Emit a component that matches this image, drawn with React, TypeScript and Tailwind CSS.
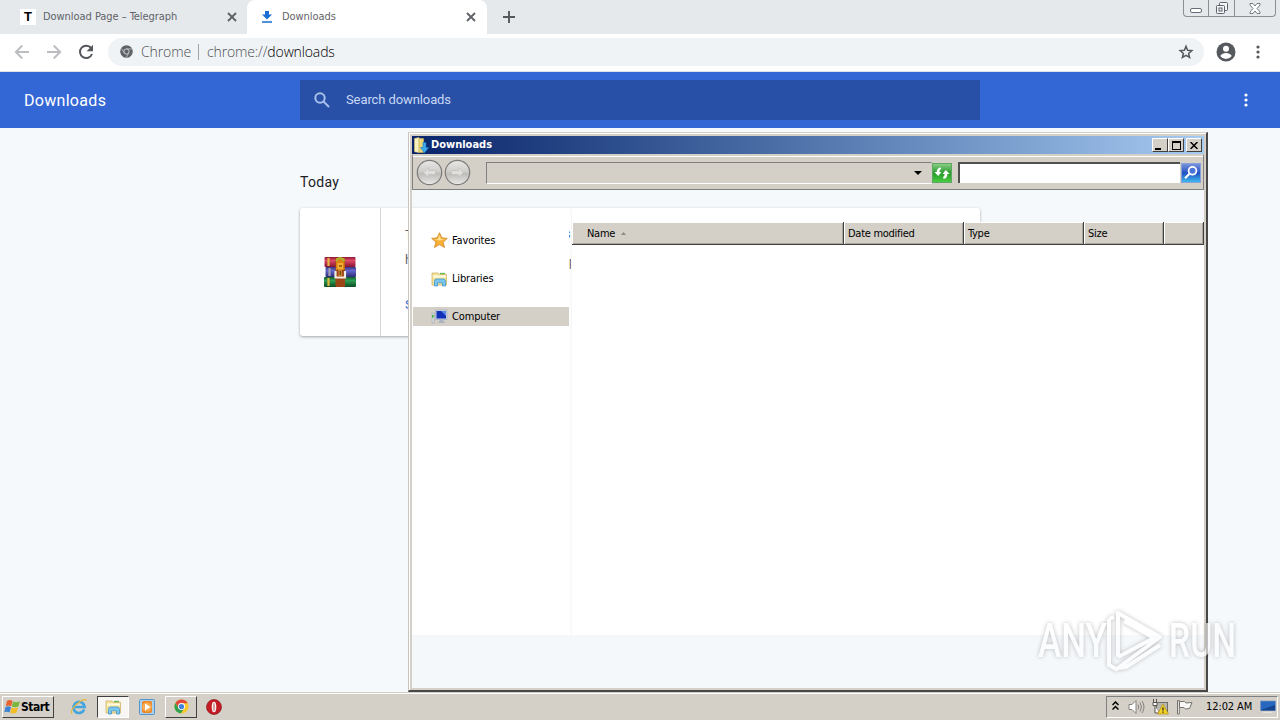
import type { ReactNode } from "react";

type IconProps = { className?: string };

function Dots({ className }: IconProps) {
  return (
    <svg width="4" height="16" viewBox="0 0 4 16" fill="currentColor" className={className}>
      <circle cx="2" cy="3" r="1.6" />
      <circle cx="2" cy="8" r="1.6" />
      <circle cx="2" cy="13" r="1.6" />
    </svg>
  );
}

function CloseIcon() {
  return (
    <svg width="10" height="10" viewBox="0 0 10 10" stroke="#5f6368" strokeWidth="1.9">
      <path d="M1 1l8 8M9 1L1 9" />
    </svg>
  );
}

function ArrowIcon({ className }: IconProps) {
  return (
    <svg width="16" height="16" viewBox="0 0 16 16" fill="none" stroke="#bbbdc0" strokeWidth="1.9" className={className}>
      <path d="M15 8H2M8.3 1.5L1.8 8l6.5 6.5" />
    </svg>
  );
}

function ReloadIcon() {
  return (
    <svg width="16" height="16" viewBox="0 0 16 16">
      <path d="M13.2 4.2A6.2 6.2 0 1 0 14 10" fill="none" stroke="#55585c" strokeWidth="2" />
      <path d="M15 0.8v6.4H8.6z" fill="#55585c" />
    </svg>
  );
}

function ChromeGrayIcon() {
  return (
    <svg width="13" height="13" viewBox="0 0 13 13">
      <circle cx="6.5" cy="6.5" r="6.3" fill="#5f6368" />
      <circle cx="6.5" cy="6.5" r="2.6" fill="none" stroke="#d4d7da" strokeWidth="0.9" />
      <path d="M6.5 3.9h5.6M4.2 7.9L1.6 3.6M8.8 7.8L6.2 12.4" stroke="#d4d7da" strokeWidth="0.7" />
    </svg>
  );
}

function ChromeColorIcon() {
  return (
    <svg width="15" height="15" viewBox="0 0 16 16">
      <circle cx="8" cy="8" r="7.5" fill="#f7c92e" />
      <path d="M1.5 4.2A7.5 7.5 0 0 1 14.6 4.4H8L4.8 9.8z" fill="#df4a3c" />
      <path d="M1.5 4.2A7.5 7.5 0 0 0 7.2 15.5L11 9.8H4.8z" fill="#31a04f" />
      <circle cx="8" cy="8" r="3.7" fill="#fff" />
      <circle cx="8" cy="8" r="2.8" fill="#4280e0" />
    </svg>
  );
}

function WinrarIcon() {
  return (
    <svg width="32" height="32" viewBox="0 0 32 32">
      <defs>
        <linearGradient id="red" x1="0" y1="0" x2="0" y2="1">
          <stop offset="0" stopColor="#8e1735" />
          <stop offset="0.35" stopColor="#dc4a68" />
          <stop offset="1" stopColor="#86122f" />
        </linearGradient>
        <linearGradient id="blue" x1="0" y1="0" x2="0" y2="1">
          <stop offset="0" stopColor="#34337e" />
          <stop offset="0.35" stopColor="#6468cc" />
          <stop offset="1" stopColor="#2b2b78" />
        </linearGradient>
        <linearGradient id="green" x1="0" y1="0" x2="0" y2="1">
          <stop offset="0" stopColor="#0e5a29" />
          <stop offset="0.35" stopColor="#2f9e54" />
          <stop offset="1" stopColor="#0b4c22" />
        </linearGradient>
      </defs>
      <rect x="0.5" y="1" width="31" height="10" rx="1" fill="url(#red)" />
      <rect x="1.5" y="11" width="30.5" height="10" rx="1" fill="url(#blue)" />
      <rect x="0" y="21" width="32" height="10" rx="1" fill="url(#green)" />
      <path d="M4.5 2v8M4.5 22v8" stroke="#e2b740" strokeWidth="2.2" />
      <path d="M5.5 12v8" stroke="#a5a3b3" strokeWidth="2.2" />
      <rect x="11.5" y="2" width="9.5" height="29" fill="#9c4617" />
      <path d="M12 2h8.5v12H12z" fill="#d98516" />
      <path d="M12 5q4-6 8.5 0" stroke="#a8b52c" strokeWidth="2" fill="none" />
      <rect x="13.5" y="7" width="5.5" height="6" fill="#f4ad2e" />
      <path d="M15 10h3" stroke="#6b3a0a" strokeWidth="1.2" />
      <path d="M11.5 15v6.5h9.5V15" fill="none" stroke="#f3ece4" strokeWidth="2.2" />
      <rect x="14.5" y="13" width="3.4" height="7" fill="#d38a2e" />
      <path d="M16.2 15v4" stroke="#4b2a12" strokeWidth="1" />
    </svg>
  );
}

function LibrariesIcon() {
  return (
    <svg width="17" height="16" viewBox="0 0 17 16">
      <path d="M1 2h6l1 1.300h7.500V14H1z" fill="#f3e29a" stroke="#cdb467" strokeWidth="0.8" />
      <path d="M2 4.500h13v2H2z" fill="#fffbe0" />
      <path d="M9 2.500h5" stroke="#66b64e" strokeWidth="1.3" />
      <path d="M3.500 15V10.300q0-2.300 2.300-2.300h6.400q2.300 0 2.300 2.300V15h-3v-3.200h-5V15z" fill="#79c7f0" stroke="#4396c9" strokeWidth="0.8" />
    </svg>
  );
}

function StarIcon() {
  return (
    <svg width="17" height="17" viewBox="0 0 17 17">
      <path d="M8.500.7l2.400 5.100 5.400.6-4.100 3.700 1.300 5.400-5-2.900-5 2.900 1.300-5.400L.7 6.400l5.400-.6z" fill="#f8b037" stroke="#d1862a" strokeWidth="0.8" />
      <path d="M8.500 3l1.400 4 4 .3-5.400 1.200L3.500 7.200 7 7z" fill="#ffe291" />
    </svg>
  );
}

function ComputerIcon() {
  return (
    <svg width="17" height="16" viewBox="0 0 17 16">
      <rect x="1" y="4" width="2.500" height="10" fill="#d3d7db" stroke="#9aa1a6" strokeWidth="0.5" />
      <rect x="1" y="6" width="1.600" height="2.500" fill="#3db23c" />
      <rect x="4.500" y="1" width="11.500" height="9.500" fill="#c9d3e4" stroke="#9ba7bd" strokeWidth="0.6" />
      <rect x="5.500" y="2" width="9.500" height="7.500" fill="#1130b8" />
      <path d="M10 2h5v5z" fill="#5d85e8" />
      <path d="M9 11h3l2 3H7z" fill="#aab3bf" />
    </svg>
  );
}

function FolderDownIcon() {
  return (
    <svg width="16" height="17" viewBox="0 0 16 17">
      <path d="M1.500 1.500L6 .5v15l-4.500-.8z" fill="#f9f1bd" stroke="#d7c170" strokeWidth="0.6" />
      <path d="M6 1.500h4.500v14H6z" fill="#ecd67c" stroke="#cbb05a" strokeWidth="0.6" />
      <path d="M10 5.500h3v5h2.700L11.500 16 7.400 10.500H10z" fill="#3eabee" stroke="#1870b8" strokeWidth="0.6" />
    </svg>
  );
}

function NavCircle({ flip }: { flip?: boolean }) {
  return (
    <svg width="27" height="27" viewBox="0 0 27 27" className={flip ? "-scale-x-100" : ""}>
      <defs>
        <linearGradient id="disc" x1="0" y1="0" x2="0" y2="1">
          <stop offset="0" stopColor="#e9e8e6" />
          <stop offset="0.45" stopColor="#d0cfcc" />
          <stop offset="0.55" stopColor="#bebdba" />
          <stop offset="1" stopColor="#eae9e7" />
        </linearGradient>
      </defs>
      <circle cx="13.5" cy="13.5" r="12.2" fill="url(#disc)" stroke="#7d7c7a" strokeWidth="1.2" />
      <path d="M12.500 8.500l-5 5 5 5v-3h7v-4h-7z" fill="#e0dfdd" stroke="#c1c0bd" strokeWidth="0.7" />
    </svg>
  );
}

function StartFlag() {
  return (
    <svg width="17" height="16" viewBox="0 0 17 16" className="shrink-0">
      <path d="M3.100 1.800q2.900-1.500 5.500.2L7.200 7.300q-2.600-1.500-5.500-.1z" fill="#e8622c" />
      <path d="M9.200 2.500q3 1.500 6.800-.3l-1.700 5.400q-3.300 1.400-6.500 0z" fill="#79b83a" />
      <path d="M1.500 8q2.900-1.400 5.500.2l-1.400 5.300Q3.200 12 .3 13.300z" fill="#3f83d4" />
      <path d="M7.700 8.500q3.200 1.400 6.400 0l-1.600 5.200q-3.200 1.500-6.300 0z" fill="#f4bd26" />
    </svg>
  );
}

function Tab({ icon, label, active }: { icon: ReactNode; label: string; active?: boolean }) {
  return (
    <div className={`flex h-[34px] items-center ${active ? "w-[240px] rounded-t-lg bg-white pr-[11px] pl-3" : "w-[247px] pr-[10px] pl-5"}`}>
      <span className="flex w-4 justify-center">{icon}</span>
      <span className="ml-[7px] flex-1 pt-px font-['DejaVu_Sans_Condensed','DejaVu_Sans',sans-serif] text-[11px] tracking-[-0.05px] text-[#5f6368] [font-stretch:condensed]">
        {label}
      </span>
      <CloseIcon />
    </div>
  );
}

function BrowserChrome() {
  return (
    <>
      <div className="flex h-[34px] items-start bg-[#e5e9ec]">
        <Tab
          label="Download Page – Telegraph"
          icon={
            <span className="flex size-4 items-center justify-center bg-white font-['Liberation_Sans',sans-serif] text-[13px] font-black text-black">
              T
            </span>
          }
        />
        <Tab
          active
          label="Downloads"
          icon={
            <svg width="12" height="14" viewBox="0 0 12 14" fill="#1a6fd0">
              <path d="M4 1h4v3.500h3L6 9.500 1 4.500h3zM1 11.300h10v1.500H1z" />
            </svg>
          }
        />
        <svg width="12" height="12" viewBox="0 0 12 12" stroke="#55585c" strokeWidth="1.9" className="mt-[11px] ml-4">
          <path d="M6 0v12M0 6h12" />
        </svg>
        <div className="mr-[4px] ml-auto flex h-[17px] w-[93px] rounded-b-[4px] border border-t-0 border-[#8a8f95]">
          <span className="flex w-[25px] items-end justify-center border-r border-[#8a8f95] pb-[3px]">
            <span className="h-[5px] w-3 rounded-[2px] border border-[#686d78] bg-white" />
          </span>
          <span className="flex w-[26px] items-center justify-center border-r border-[#8a8f95]">
            <svg width="14" height="14" viewBox="0 0 14 14" fill="#f4f6f8" stroke="#5d626d">
              <rect x="4.500" y="1.500" width="8" height="8" rx="1" />
              <rect x="1.500" y="4.500" width="8" height="8" rx="1" />
              <rect x="4" y="7" width="3" height="3" />
            </svg>
          </span>
          <span className="flex flex-1 items-center justify-center">
            <svg width="12" height="11" viewBox="0 0 12 11" fill="#fff" stroke="#686d78" strokeWidth="0.9">
              <path d="M1 .5h3L6 3 8 .5h3v1.500L8 5.500 11 9v1.500H8L6 8l-2 2.500H1V9l3-3.500L1 2z" />
            </svg>
          </span>
        </div>
      </div>
      <div className="flex h-[38px] items-center border-b border-[#dfe2e6] bg-white pr-5 pb-[2px]">
        <span className="ml-3.5 flex w-[94px] gap-4">
          <ArrowIcon />
          <ArrowIcon className="-scale-x-100" />
          <ReloadIcon />
        </span>
        <div className="flex h-7 flex-1 items-center rounded-full bg-[#f0f3f5] pr-2.5 pl-3 font-['Open_Sans',sans-serif] text-[14px] font-light text-[#4b4f54]">
          <ChromeGrayIcon />
          <span className="ml-[8px] w-[57px] tracking-[-0.1px]">Chrome</span>
          <span className="h-4 w-px bg-[#a0a4a9]" />
          <span className="ml-2 flex-1 tracking-[-0.13px]">
            chrome://<span className="text-black">downloads</span>
          </span>
          <svg width="16" height="16" viewBox="0 0 16 16" fill="none" stroke="#55585c" strokeWidth="1.5">
            <path d="M8 2.300l1.600 4 4.200.3-3.200 2.800 1 4.100L8 11.300l-3.600 2.200 1-4.100-3.200-2.800 4.200-.3z" />
          </svg>
        </div>
        <svg width="20" height="20" viewBox="0 0 20 20" className="mr-[20px] ml-[12px]">
          <circle cx="10" cy="10" r="9.500" fill="#55585c" />
          <circle cx="10" cy="6.700" r="3" fill="#fff" />
          <path d="M4.200 14q2-3 5.800-3t5.800 3q-2.200 3-5.800 3t-5.800-3z" fill="#fff" />
        </svg>
        <Dots className="text-[#55585c]" />
      </div>
    </>
  );
}

function DownloadsPage() {
  return (
    <div className="flex flex-1 flex-col bg-[#f6f9fc] font-[Roboto,sans-serif]">
      <div className="flex h-14 items-center bg-[#3367d6] pr-8 pl-6 text-white">
        <h1 className="w-[276px] pt-[2px] text-[16px] tracking-[0.3px]">Downloads</h1>
        <div className="flex h-10 w-[680px] items-center bg-[#2850a7] pl-[14px] text-[13px] text-[#c9d8f5]">
          <svg width="16" height="16" viewBox="0 0 16 16" fill="none" stroke="#a9c0ed" strokeWidth="2">
            <circle cx="6" cy="6" r="4.700" />
            <path d="M9.500 9.500l5.500 5.500" />
          </svg>
          <span className="ml-4 tracking-[-0.1px]">Search downloads</span>
        </div>
        <Dots className="ml-auto" />
      </div>
      <div className="mx-auto w-[680px] pt-[45px]">
        <h2 className="h-[35px] text-[14px] leading-[19px] tracking-[0.3px] text-[#202124]">Today</h2>
        <div className="flex h-32 rounded-[3px] bg-white shadow-[0_1px_3px_rgba(60,64,67,0.45)]">
          <div className="flex w-[81px] items-center justify-center border-r border-[#d5d7da]">
            <WinrarIcon />
          </div>
          <div className="w-[28px] overflow-hidden pt-[17px] pl-6 text-[13px] text-[#5f6368]">
            <p className="h-[25px]">T</p>
            <p className="h-[45px]">h</p>
            <p className="text-[#3367d6]">S</p>
          </div>
        </div>
      </div>
    </div>
  );
}

const raised = "border border-t-white border-l-white border-r-[#404040] border-b-[#404040] bg-[#d4d0c8]";

function SideItem({ icon, label, selected }: { icon: ReactNode; label: string; selected?: boolean }) {
  return (
    <div className={`flex h-[19px] items-center gap-1 pl-[18px] ${selected ? "bg-[#d4d0c8]" : ""}`}>
      {icon}
      <span className="pt-[2px] tracking-[-0.15px]">{label}</span>
    </div>
  );
}

function ColumnHeader({ label, className }: { label?: string; className: string }) {
  return (
    <div className={`flex items-center border-r border-b border-[#404040] bg-[#d4d0c8] pt-[2px] tracking-[-0.28px] shadow-[inset_1px_1px_0_#fff,inset_-1px_-1px_0_#aaa69e] ${className}`}>
      {label}
      {label === "Name" && (
        <svg width="5" height="3" viewBox="0 0 5 3" className="mb-[2px] ml-[6px]">
          <path d="M0 3L2.500 0 5 3z" fill="#8d8a84" />
        </svg>
      )}
    </div>
  );
}

function ExplorerWindow() {
  return (
    <div className="absolute top-[132px] left-[408px] flex h-[560px] w-[800px] flex-col border-t border-r-2 border-b-2 border-l border-t-[#d4d0c8] border-l-[#c7c4be] border-r-[#484848] border-b-[#484848] font-['DejaVu_Sans_Condensed','DejaVu_Sans',sans-serif] text-[11px] text-black [font-stretch:condensed]">
      <div className="flex min-h-0 flex-1 flex-col border-t border-l border-white">
        <div className="flex min-h-0 flex-1 flex-col border-2 border-t-2 border-[#d4d0c8]">
          <div className="flex h-[18px] shrink-0 items-center bg-linear-to-r from-[#0a246a] to-[#a6caf0] pr-[2px] pl-[1px] font-bold text-white">
            <FolderDownIcon />
            <span className="ml-[2px] flex-1 pt-px">Downloads</span>
            <span className={`flex h-[14px] w-4 items-end justify-center pb-[1px] ${raised}`}>
              <span className="mr-1 h-[2px] w-[6px] bg-black" />
            </span>
            <span className={`flex h-[14px] w-4 items-center justify-center ${raised}`}>
              <span className="h-[9px] w-[9px] border border-t-2 border-black" />
            </span>
            <span className={`ml-[2px] flex h-[14px] w-4 items-center justify-center ${raised}`}>
              <svg width="8" height="7" viewBox="0 0 8 7" stroke="#000" strokeWidth="1.500">
                <path d="M.5 0l7 7M7.500 0l-7 7" />
              </svg>
            </span>
          </div>

          <div className="flex h-[36px] shrink-0 items-center border border-t-2 border-[#808080] border-t-[#d4d0c8] bg-[#d4d0c8] pl-[3px] shadow-[inset_0_1px_0_#fff]">
            <NavCircle />
            <span className="ml-px">
              <NavCircle flip />
            </span>
            <div className="ml-[15px] flex h-[22px] w-[446px] items-center justify-end border border-[#808080] border-r-transparent border-b-white pr-[9px]">
              <svg width="8" height="4" viewBox="0 0 8 4">
                <path d="M0 0h8L4 4z" />
              </svg>
            </div>
            <svg width="20" height="20" viewBox="0 0 20 20">
              <defs>
                <linearGradient id="go" x1="0" y1="0" x2="0" y2="1">
                  <stop offset="0" stopColor="#8fd08a" />
                  <stop offset="0.5" stopColor="#259a2a" />
                  <stop offset="1" stopColor="#49cf40" />
                </linearGradient>
              </defs>
              <rect x="0.500" y="0.500" width="19" height="19" fill="url(#go)" stroke="#5fa864" />
              <path d="M9 4.500q-4 0-4.300 4.500H2.300L6.200 13l3.300-4H7.400q0-2.500 1.600-3zM11.500 15.800q4-.3 3.800-4.800h2.400l-3.900-4-3.300 4h2.100q0 2.500-1.600 3z" fill="#fff" />
            </svg>
            <div className="ml-[6px] h-[21px] w-[222px] border-t-2 border-l-2 border-t-[#505050] border-l-[#505050] bg-white" />
            <svg width="20" height="20" viewBox="0 0 20 20" className="ml-px">
              <defs>
                <linearGradient id="find" x1="0" y1="0" x2="0" y2="1">
                  <stop offset="0" stopColor="#7d96dc" />
                  <stop offset="0.5" stopColor="#2250c4" />
                  <stop offset="1" stopColor="#3fc0f0" />
                </linearGradient>
              </defs>
              <rect x="0.500" y="0.500" width="19" height="19" fill="url(#find)" stroke="#86a0d8" />
              <circle cx="11.500" cy="7.800" r="3.900" fill="#4a74d6" stroke="#fff" strokeWidth="1.800" />
              <path d="M8.500 10.800L4 15.200" stroke="#fff" strokeWidth="2.200" />
            </svg>
          </div>

          <div className="flex h-[445px] shrink-0">
            <div className="mt-[18px] w-[157px] bg-white pt-[23px] pl-px">
              <div className="flex flex-col gap-[19px]">
                <SideItem label="Favorites" icon={<StarIcon />} />
                <SideItem label="Libraries" icon={<LibrariesIcon />} />
                <SideItem selected label="Computer" icon={<ComputerIcon />} />
              </div>
            </div>
            <div className="mt-[18px] w-[3px] overflow-hidden border-r border-[#f6f6f6] bg-[#fdfdfd] pt-[18px] font-[Roboto,sans-serif] text-[12px] leading-[16px]">
              <p className="-ml-[4px] h-[28px] text-[#3367d6]">s</p>
              <p className="text-[#5f6368]">p</p>
            </div>
            <div className="mt-[32px] flex-1 bg-white">
              <div className="flex h-[23px]">
                <ColumnHeader label="Name" className="w-[272px] pl-[15px]" />
                <ColumnHeader label="Date modified" className="w-[120px] pl-1" />
                <ColumnHeader label="Type" className="w-[120px] pl-1" />
                <ColumnHeader label="Size" className="w-[80px] pl-1" />
                <ColumnHeader className="flex-1" />
              </div>
            </div>
          </div>
          <div className="flex-1 bg-[#f5f8fb]" />
        </div>
      </div>
    </div>
  );
}

function Watermark() {
  return (
    <div className="absolute top-[608px] left-[1038px] flex h-[66px] w-[200px] items-center font-[Roboto,sans-serif] font-medium text-white opacity-65 drop-shadow-[0_0_2px_rgba(90,90,90,0.6)]">
      <span className="w-[67px] origin-left scale-x-[0.73] text-[48px] leading-none whitespace-nowrap">ANY</span>
      <svg width="59" height="64" viewBox="0 0 59 64" fill="none" stroke="#fff" strokeWidth="4" strokeLinejoin="round">
        <path d="M13 48V4l42 24-42 31 8-1 34-22M13 48l36-19-30-17M4 10v46l9 5M4 10l5-2" />
      </svg>
      <span className="ml-[5px] w-[66px] origin-left scale-x-[0.7] text-[48px] leading-none whitespace-nowrap">RUN</span>
    </div>
  );
}

function Taskbar() {
  return (
    <div className="flex h-7 items-center border-t border-[#d4d0c8] bg-[#d4d0c8] pl-[2px] font-['DejaVu_Sans_Condensed','DejaVu_Sans',sans-serif] text-[11px] text-black shadow-[inset_0_1px_0_#fff] [font-stretch:condensed]">
      <div className={`flex h-[22px] w-[52px] items-center pl-px text-[12px] font-bold ${raised}`}>
        <StartFlag />
        <span className="tracking-[-0.5px]">Start</span>
      </div>
      <svg width="18" height="18" viewBox="0 0 18 18" className="ml-4" fill="none">
        <path d="M14.200 11.500A5.600 5.600 0 1 1 14.600 9H4" stroke="#42a5df" strokeWidth="2.600" />
        <path d="M2 15.500C-1 12 12-.5 16.500 2.200" stroke="#e3b83b" strokeWidth="1.200" />
      </svg>
      <div className="ml-[9px] flex h-[22px] w-8 items-center justify-center border border-t-[#404040] border-r-white border-b-white border-l-[#404040] bg-[#f7f6f3]">
        <LibrariesIcon />
      </div>
      <svg width="16" height="16" viewBox="0 0 16 16" className="ml-[10px]">
        <rect x="0.500" y="0.500" width="15" height="15" rx="1" fill="#a9d0ef" stroke="#5494c8" />
        <rect x="3" y="2" width="10" height="12" rx="2" fill="#ee8421" />
        <circle cx="8" cy="8" r="4.800" fill="#f6a94e" />
        <path d="M6 4.500v7L11.500 8z" fill="#fff" />
      </svg>
      <div className={`ml-[10px] flex h-[22px] w-8 items-center justify-center ${raised}`}>
        <ChromeColorIcon />
      </div>
      <svg width="16" height="16" viewBox="0 0 16 16" className="ml-[9px]">
        <circle cx="8" cy="8" r="7.500" fill="#c51b22" stroke="#7c0c12" strokeWidth="0.6" />
        <ellipse cx="8" cy="8" rx="2.300" ry="5.300" fill="#fbf1f1" />
        <ellipse cx="8" cy="8" rx="0.800" ry="4.200" fill="#c98a8c" />
      </svg>

      <div className="mr-[2px] ml-auto flex h-[22px] w-[172px] items-center border border-t-[#808080] border-r-white border-b-white border-l-[#808080] pl-[5px]">
        <svg width="7" height="10" viewBox="0 0 7 10" fill="none" stroke="#000" strokeWidth="1.500" className="mb-px">
          <path d="M.5 4l3-3 3 3M.5 8.500l3-3 3 3" />
        </svg>
        <svg width="17" height="16" viewBox="0 0 17 16" className="ml-[9px]" fill="none" stroke="#85827c">
          <path d="M1 5.500h3L8 1.500v13L4 10.500H1z" fill="#fff" />
          <path d="M10 5.500q1.500 2.500 0 5M12 3.500q3 4.500 0 9M14 2q4 6 0 12" />
        </svg>
        <svg width="17" height="16" viewBox="0 0 17 16" className="ml-[7px]">
          <rect x="4.500" y="3.500" width="11" height="9" fill="#b9b7b2" stroke="#6e6c68" />
          <path d="M1.500 0v3M4.500 0v3M1 3.500h4v3H1zM3 7v7h4" fill="#fff" stroke="#55534f" />
          <path d="M11 5l5.500 10h-11z" fill="#f6d329" stroke="#b18c12" strokeWidth="0.7" />
          <path d="M11 8.500v3M11 12.500v1.300" stroke="#222" strokeWidth="1.300" />
        </svg>
        <svg width="17" height="16" viewBox="0 0 17 16" className="ml-[7px]" fill="#f7f6f4" stroke="#76736d">
          <path d="M1.500 15V1.500h1.800V15z" />
          <path d="M3.500 2.500h5l1.500 1.500 6-.5-2.500 6-4 .5-1.500-1.500H3.500z" />
        </svg>
        <span className="ml-[13px] pt-[2px] tracking-[-0.1px] whitespace-nowrap">12:02 AM</span>
        <svg width="16" height="13" viewBox="0 0 16 13" className="mr-[1px] ml-auto">
          <path d="M.5 1h15v9.500H.5z" fill="#2767bd" stroke="#7798c1" strokeWidth="0.7" />
          <path d="M1 10L15 5v5.500H1z" fill="#15458f" />
          <path d="M3 12.500h9" stroke="#e6e4df" />
        </svg>
      </div>
    </div>
  );
}

export default function App() {
  return (
    <div className="relative flex h-[720px] w-[1280px] flex-col overflow-hidden bg-[#f6f9fc]">
      <BrowserChrome />
      <DownloadsPage />
      <Taskbar />
      <ExplorerWindow />
      <Watermark />
    </div>
  );
}
